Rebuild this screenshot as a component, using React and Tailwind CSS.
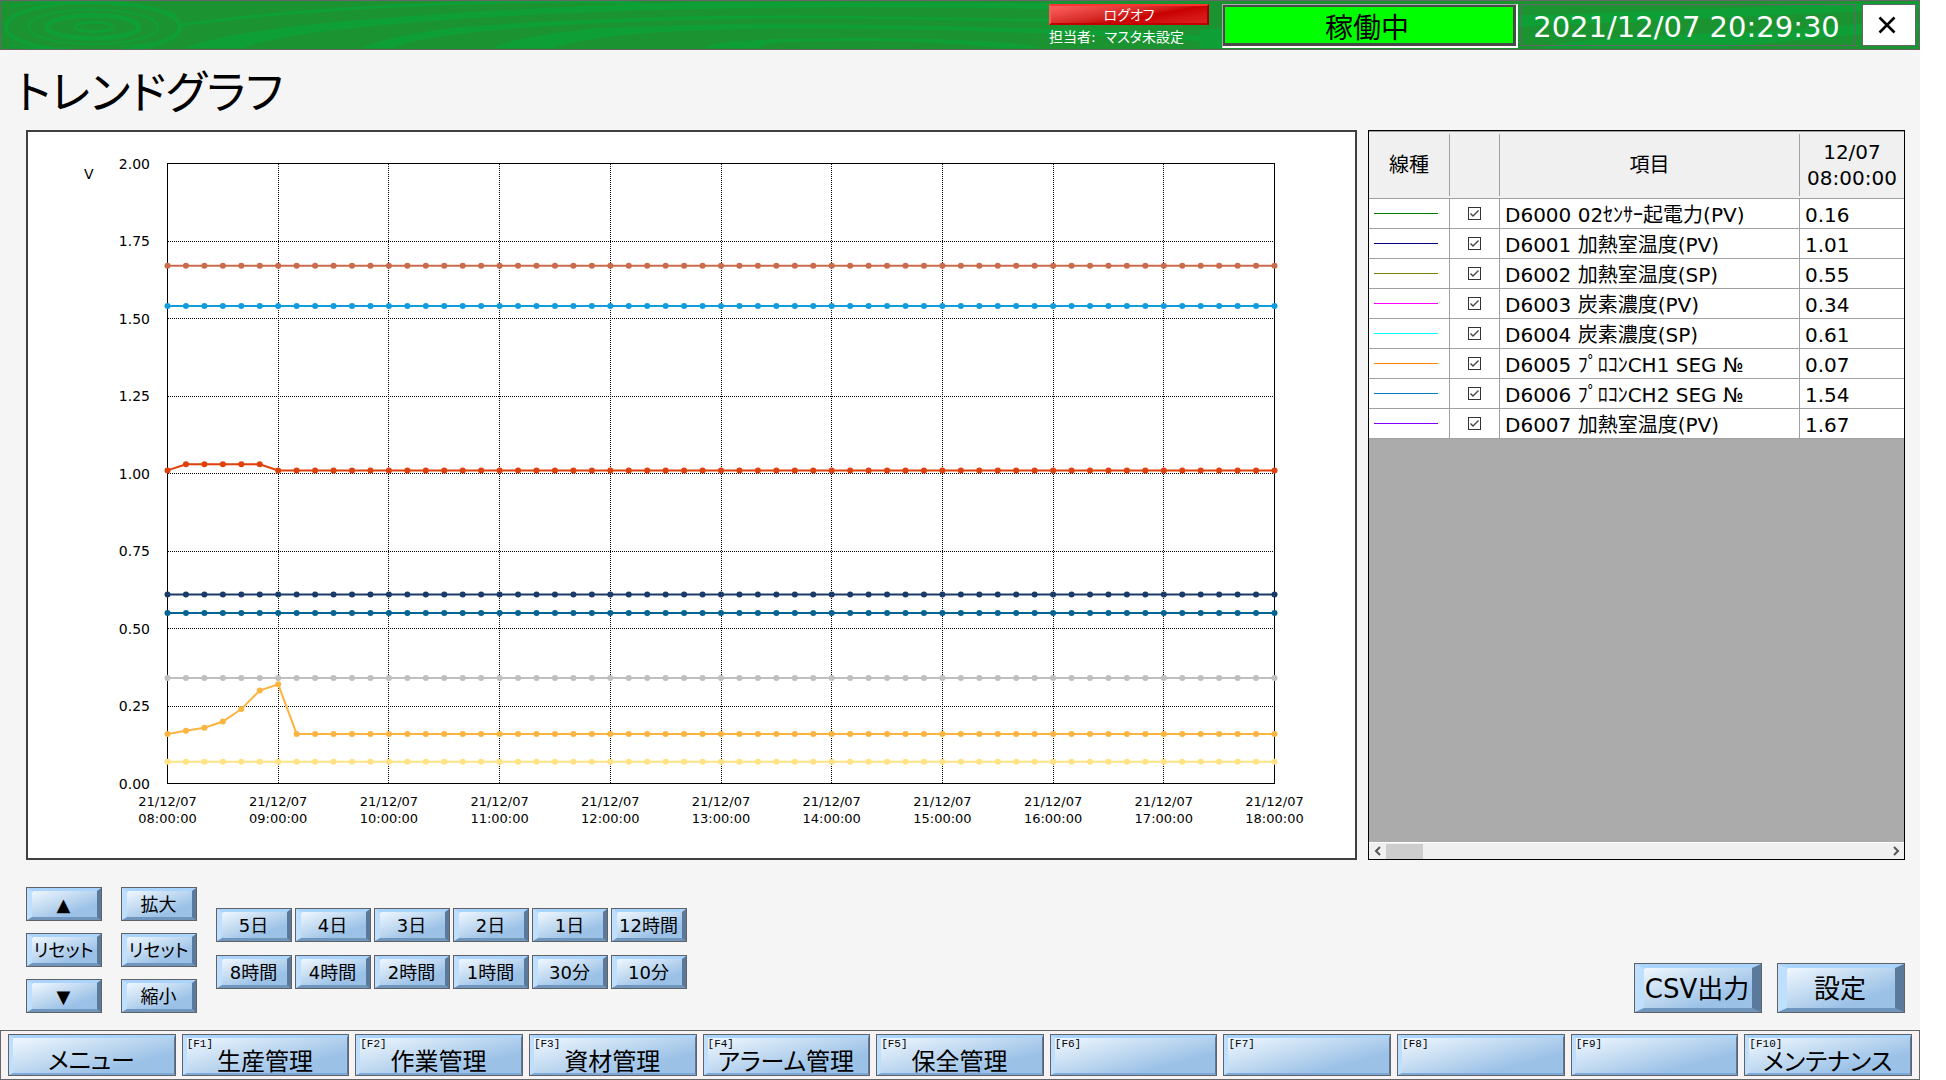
import React from 'react';
import { useState } from 'react';

// 時間軸 (1時間ごと)
const hours = [8, 9, 10, 11, 12, 13, 14, 15, 16, 17, 18];

// 縦軸の目盛
const ticks = ['2.00', '1.75', '1.50', '1.25', '1.00', '0.75', '0.50', '0.25', '0.00'];

// line: 凡例の線色, plot: グラフの線色, head: 先頭の値 (以降は value で一定)
const items = [
  { name: 'D6000 02ｾﾝｻｰ起電力(PV)', value: 0.16, line: '#008000', plot: '#fcb441', head: [0.16, 0.17, 0.18, 0.2, 0.24, 0.3, 0.32] },
  { name: 'D6001 加熱室温度(PV)', value: 1.01, line: '#000080', plot: '#e0400a', head: [1.01, 1.03, 1.03, 1.03, 1.03, 1.03] },
  { name: 'D6002 加熱室温度(SP)', value: 0.55, line: '#808000', plot: '#056492', head: [] },
  { name: 'D6003 炭素濃度(PV)', value: 0.34, line: '#ff00ff', plot: '#bfbfbf', head: [] },
  { name: 'D6004 炭素濃度(SP)', value: 0.61, line: '#00ffff', plot: '#1a3b69', head: [] },
  { name: 'D6005 ﾌﾟﾛｺﾝCH1 SEG №', value: 0.07, line: '#ff8000', plot: '#ffe382', head: [] },
  { name: 'D6006 ﾌﾟﾛｺﾝCH2 SEG №', value: 1.54, line: '#0080c0', plot: '#129cdd', head: [] },
  { name: 'D6007 加熱室温度(PV)', value: 1.67, line: '#8000ff', plot: '#ca6b4b', head: [] },
];

const ranges = ['5日', '4日', '3日', '2日', '1日', '12時間', '8時間', '4時間', '2時間', '1時間', '30分', '10分'];

const menus = ['メニュー', '生産管理', '作業管理', '資材管理', 'アラーム管理', '保全管理', '', '', '', '', 'メンテナンス'];

// プロット領域
const left = 139.5;
const top = 31.5;
const plotWidth = 1107;
const plotHeight = 620;

const toX = index => left + (plotWidth * index) / 60;
const toY = value => top + plotHeight * (1 - value / 2);

const HeaderPattern = () => (
  <svg
    className="absolute inset-0 w-full h-full"
    viewBox="0 0 1920 50"
    preserveAspectRatio="none"
    aria-hidden="true"
  >
    <g fill="none" stroke="#0f9f37" strokeWidth="3">
      <ellipse cx="93" cy="27" rx="19" ry="5" />
      <ellipse cx="92" cy="27" rx="46" ry="12" strokeWidth="5" />
      <ellipse cx="92" cy="27" rx="65" ry="18" strokeWidth="2" />
      <ellipse cx="92" cy="27" rx="87" ry="26" strokeWidth="4" />
      <path d="M10 6 Q40 -2 80 3 M110 4 Q150 4 176 15 M10 46 Q40 52 70 49 M120 47 Q150 46 172 40" strokeWidth="2" />
      <path d="M180 25 Q270 12 400 5 T640 2" />
    </g>
    <g fill="#0f9f37">
      <path d="M183 49 Q240 26 450 13 Q600 3 700 1 L1060 2 L1060 9 Q850 3 640 10 Q400 18 290 37 Q255 43 243 49Z" />
      <path d="M362 49 Q380 38 450 28 Q620 14 820 15 L1200 21 L1200 24 L820 18 Q620 18 480 32 Q410 39 395 49Z" />
      <path d="M492 49 Q510 38 590 29 Q700 22 860 25 Q1060 27 1200 36 L1200 42 Q1060 32 860 29 Q700 27 610 37 Q565 43 555 49Z" />
      <path d="M704 49 Q710 41 800 39 Q920 37 1000 43 Q1035 46 1040 49 L1000 49 Q900 38 780 43 Q760 45 760 49Z" />
      <path d="M1200 30 Q1380 16 1560 14 Q1720 8 1840 2 L1920 1 L1920 8 Q1780 14 1640 22 Q1420 28 1300 49 L1200 49Z" />
      <path d="M1540 49 Q1560 40 1700 34 Q1820 30 1856 24 L1920 22 L1920 30 Q1820 38 1720 49Z" />
    </g>
  </svg>
);

const Button = ({ children, large }) => (
  <button
    type="button"
    className={
      large
        ? 'flex w-32 h-[50px] border border-[#5f6368] bg-[#a4cdf8] text-[26px]'
        : 'flex w-[76px] h-[34px] border border-[#5f6368] bg-[#a4cdf8] text-lg'
    }
  >
    <span
      className={
        large
          ? 'flex flex-1 h-full items-center justify-center border-t-4 border-b-4 border-l-9 border-r-9 border-t-[#a9d4ff] border-b-[#7096bd] border-l-[#bfdfff] border-r-[#5b7a9b]'
          : 'flex flex-1 h-full items-center justify-center border-t-3 border-b-3 border-l-5 border-r-4 border-t-[#a9d4ff] border-b-[#7096bd] border-l-[#bfdfff] border-r-[#5b7a9b]'
      }
    >
      <span className="flex w-full h-full items-center justify-center pt-0.5 pr-0.5 rounded-xs bg-linear-160 from-[#f0f7fe] from-0% via-[#c3dbf1] via-40% to-[#9bc1e7] to-75% leading-none whitespace-nowrap">
        {children}
      </span>
    </span>
  </button>
);

const TrendChart = ({ visible }) => (
  <svg className="block w-full h-auto" viewBox="0 0 1327 726" role="img" aria-label="トレンドグラフ">
    <g stroke="#000" strokeWidth="1" strokeDasharray="1 1" shapeRendering="crispEdges">
      {ticks.slice(1, -1).map((tick, index) => (
        <line key={tick} x1={left} x2={left + plotWidth} y1={toY(2 - (index + 1) / 4)} y2={toY(2 - (index + 1) / 4)} />
      ))}
      {hours.slice(1, -1).map((hour, index) => (
        <line key={hour} x1={toX((index + 1) * 6)} x2={toX((index + 1) * 6)} y1={top} y2={top + plotHeight} />
      ))}
    </g>
    <rect x={left} y={top} width={plotWidth} height={plotHeight} fill="none" stroke="#000" />
    {items.map((item, index) => {
      if (!visible[index]) return null;
      const points = Array.from({ length: 61 }, (_, i) => [toX(i), toY(item.head[i] ?? item.value)]);
      return (
        <g key={item.name} fill={item.plot}>
          <polyline points={points.join(' ')} fill="none" stroke={item.plot} strokeWidth="2" />
          {points.map(([x, y]) => (
            <circle key={x} cx={x} cy={y} r="3" />
          ))}
        </g>
      );
    })}
    <text x="56" y="47" fontSize="14">V</text>
    <g fontSize="14" textAnchor="end">
      {ticks.map((tick, index) => (
        <text key={tick} x="122" y={toY(2 - index / 4) + 5}>{tick}</text>
      ))}
    </g>
    <g fontSize="13" textAnchor="middle">
      {hours.map((hour, index) => (
        <text key={hour} y="674">
          <tspan x={toX(index * 6)}>21/12/07</tspan>
          <tspan x={toX(index * 6)} dy="17">{String(hour).padStart(2, '0')}:00:00</tspan>
        </text>
      ))}
    </g>
  </svg>
);

const ItemTable = ({ visible, onToggle }) => (
  <div className="flex flex-col w-[537px] shrink-0 border border-black bg-[#ababab] overflow-hidden">
    <table className="w-full table-fixed border-separate border-spacing-0 text-xl leading-none border-t border-[#a0a0a0] [font-feature-settings:normal]">
      <colgroup>
        <col className="w-[81px]" />
        <col className="w-[50px]" />
        <col className="w-[300px]" />
        <col />
      </colgroup>
      <thead className="bg-[#f0f0f0]">
        <tr>
          {['線種', '', '項目'].map(title => (
            <th key={title} scope="col" className="p-0 font-normal border-b border-[#a0a0a0]">
              <div className="flex h-[62px] my-0.5 items-center justify-center border-r border-[#a0a0a0]">
                {title}
              </div>
            </th>
          ))}
          <th scope="col" className="p-0 font-normal leading-[26px] border-b border-[#a0a0a0]">
            12/07
            <br />
            08:00:00
          </th>
        </tr>
      </thead>
      <tbody className="bg-white">
        {items.map((item, index) => (
          <tr key={item.name} className="h-[30px]">
            <td className="p-0 pl-[5px] border-b border-r border-[#a0a0a0]">
              <div className="w-16 h-px" style={{ backgroundColor: item.line }}></div>
            </td>
            <td className="p-0 border-b border-r border-[#a0a0a0]">
              <label className="grid w-[13px] h-[13px] mx-auto">
                <input
                  type="checkbox"
                  aria-label={item.name}
                  checked={visible[index]}
                  onChange={() => onToggle(index)}
                  className="col-start-1 row-start-1 appearance-none w-[13px] h-[13px] border border-[#333] bg-white"
                />
                {visible[index] && (
                  <svg className="col-start-1 row-start-1 pointer-events-none" viewBox="0 0 13 13" aria-hidden="true">
                    <path d="M2.5 6.5 L5 9 L10.5 3.5" fill="none" stroke="#444" strokeWidth="1.4" />
                  </svg>
                )}
              </label>
            </td>
            <td className="p-0 pt-0.5 pl-[5px] border-b border-r border-[#a0a0a0] whitespace-nowrap">{item.name}</td>
            <td className="p-0 pt-0.5 pl-[5px] border-b border-[#a0a0a0]">{item.value.toFixed(2)}</td>
          </tr>
        ))}
      </tbody>
    </table>
    {/* 横スクロールバー */}
    <div className="flex items-center h-[17px] mt-auto border-t border-white bg-[#f0f0f0]">
      <button type="button" aria-label="左へ" className="flex w-[17px] h-full items-center justify-center">
        <svg width="8" height="10" viewBox="0 0 8 10" fill="none" stroke="#555" strokeWidth="2">
          <path d="M6 1 L2 5 L6 9" />
        </svg>
      </button>
      <div className="w-[37px] h-[15px] bg-[#cdcdcd]"></div>
      <button type="button" aria-label="右へ" className="flex w-[17px] h-full ml-auto items-center justify-center">
        <svg width="8" height="10" viewBox="0 0 8 10" fill="none" stroke="#555" strokeWidth="2">
          <path d="M2 1 L6 5 L2 9" />
        </svg>
      </button>
    </div>
  </div>
);

export default function App() {
  const [visible, setVisible] = useState(items.map(() => true));

  const handleToggle = index => {
    setVisible(visible.map((v, i) => (i === index ? !v : v)));
  };

  return (
    <div className="bg-white pr-[26px] text-black font-['DejaVu_Sans','Noto_Sans_CJK_JP',sans-serif] [font-feature-settings:'palt']">
      <div className="flex flex-col min-h-screen bg-[#f5f5f5]">
        <header className="relative h-[50px] border border-[#666] bg-[#1c9331]">
          <HeaderPattern />
          <div className="relative flex justify-end items-start pt-[3px] pr-[3px] text-white">
            <div className="w-40 mr-[13px] text-sm">
              <button
                type="button"
                className="block w-full h-[21px] border-2 border-t-[#f33] border-l-[#ff5a5a] border-r-[#a00000] border-b-[#c00000] bg-linear-170 from-[#ff6060] via-[#c80000] via-60% to-[#e02020] leading-none"
              >
                ログオフ
              </button>
              <div className="pt-1 leading-4 whitespace-pre">担当者:  マスタ未設定</div>
            </div>
            <div className="w-[296px] h-11 mr-[3px] border-t border-l border-r-2 border-b-2 border-t-[#aaa] border-l-[#aaa] border-r-white border-b-white">
              <div className="flex h-full items-center justify-center pt-2 pr-1 border-t-2 border-l-2 border-r-3 border-b-3 border-[#4a4a4a] bg-[#00ff00] text-[28px] leading-none text-black">
                稼働中
              </div>
            </div>
            <div className="flex w-[335px] h-[42px] mr-[6px] items-center justify-center pt-1 pr-1 border border-[#666] text-[29px] leading-none whitespace-nowrap">
              2021/12/07 20:29:30
            </div>
            <button
              type="button"
              aria-label="閉じる"
              className="flex w-[54px] h-[42px] items-center justify-center pr-1 border border-[#666] bg-white"
            >
              <svg width="18" height="18" viewBox="0 0 18 18" stroke="#000" strokeWidth="2.6">
                <path d="M1.5 1.5 L16.5 16.5 M16.5 1.5 L1.5 16.5" />
              </svg>
            </button>
          </div>
        </header>

        <h1 className="h-20 pt-1 pl-4 text-[45px] leading-[80px]">トレンドグラフ</h1>

        <main className="flex flex-col flex-1 pl-[26px] pr-[15px]">
          <div className="flex gap-[11px]">
            <div className="flex-1 min-w-0 border-2 border-[#404040] bg-white">
              <TrendChart visible={visible} />
            </div>
            <ItemTable visible={visible} onToggle={handleToggle} />
          </div>

          <div className="flex flex-1 items-start pb-[17px]">
            <div className="grid grid-cols-2 gap-x-[19px] gap-y-3 pt-[27px]">
              <Button>▲</Button>
              <Button>拡大</Button>
              <Button>リセット</Button>
              <Button>リセット</Button>
              <Button>▼</Button>
              <Button>縮小</Button>
            </div>
            <div className="grid grid-cols-6 gap-x-[3px] gap-y-[13px] pt-12 ml-[19px]">
              {ranges.map(range => (
                <Button key={range}>{range}</Button>
              ))}
            </div>
            <div className="flex gap-[15px] ml-auto self-end">
              <Button large>CSV出力</Button>
              <Button large>設定</Button>
            </div>
          </div>
        </main>

        <footer className="grid grid-cols-11 gap-[6px] h-[50px] px-[7px] py-[3px] border border-[#666] bg-[#f7f3f5]">
          {menus.map((menu, index) => (
            <button
              key={index}
              type="button"
              aria-label={menu || `F${index}`}
              className="flex h-[42px] border border-[#5f6368]"
            >
              <span className="flex flex-col w-full h-full items-center border-t-3 border-l-4 border-r border-b-2 border-t-[#a9d4ff] border-l-[#bfdfff] border-r-[#5b7a9b] border-b-[#7ea9d6] bg-linear-165 from-[#f0f7fe] from-0% via-[#c3dbf1] via-40% to-[#9bc1e7] to-75%">
                <span className="self-start h-3 font-['Liberation_Mono',monospace] text-[11px] leading-3">
                  {index > 0 && `[F${index}]`}
                </span>
                <span className="pr-1 text-2xl leading-6 whitespace-nowrap">{menu}</span>
              </span>
            </button>
          ))}
        </footer>
      </div>
    </div>
  );
}
